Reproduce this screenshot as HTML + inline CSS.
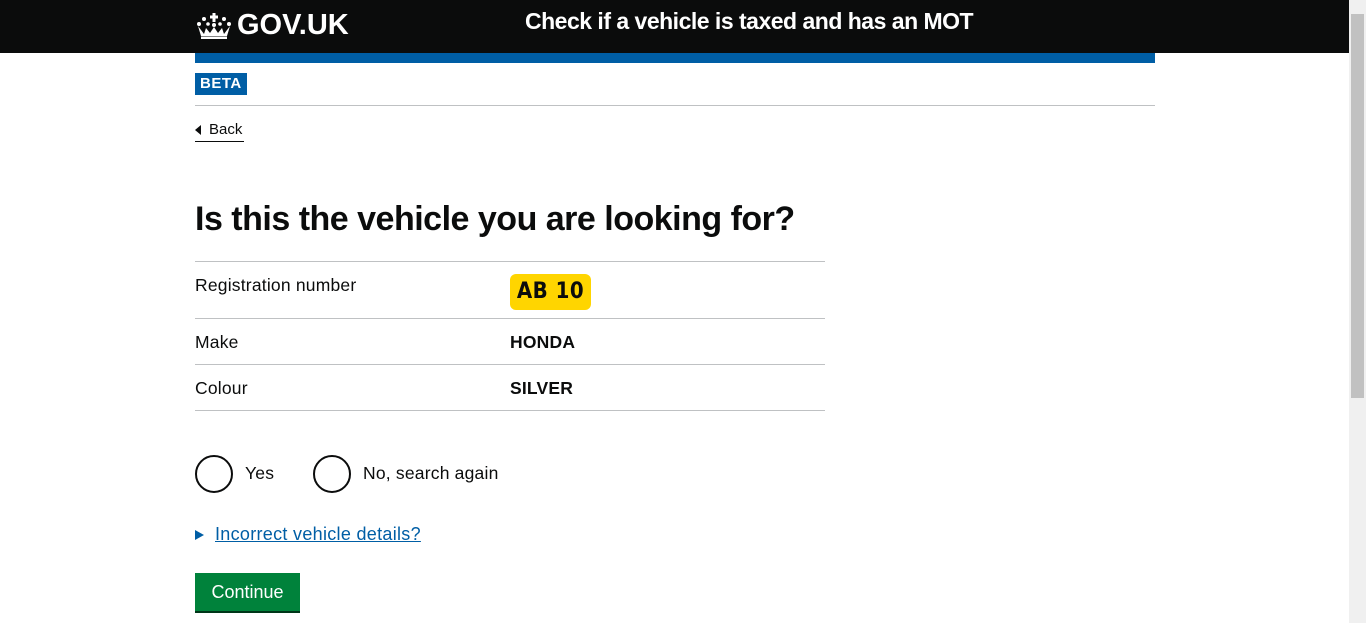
<!DOCTYPE html>
<html><head><meta charset="utf-8"><style>
*{margin:0;padding:0;box-sizing:border-box}
body{width:1366px;height:623px;overflow:hidden;background:#fff;font-family:"Liberation Sans",sans-serif;color:#0b0c0c;position:relative}
.hdr{position:absolute;left:0;top:0;width:1349px;height:53px;background:#0b0c0c}
.logo{position:absolute;left:237px;top:9px;color:#fff;font-weight:bold;font-size:29px}
.crown{position:absolute;left:196px;top:13px}
.title{position:absolute;left:525px;top:8px;color:#fff;font-weight:bold;font-size:23px;letter-spacing:-0.5px}
.bar{position:absolute;left:195px;top:53px;width:960px;height:10px;background:#005ea5}
.beta{position:absolute;left:195px;top:73px;background:#005ea5;color:#fff;font-weight:bold;font-size:15px;padding:2px 5px;height:22px;letter-spacing:0.5px}
.hr{position:absolute;left:195px;height:1px;background:#bfc1c3}
.back{position:absolute;left:195px;top:121px;font-size:15px;border-bottom:1px solid #0b0c0c;padding-left:14px;height:21px;width:49px}
.back:before{content:"";position:absolute;left:0;top:4px;border-right:6px solid #0b0c0c;border-top:5px solid transparent;border-bottom:5px solid transparent}
h1{position:absolute;left:195px;top:200px;font-size:34px;font-weight:bold;letter-spacing:-0.5px}
.t{position:absolute;font-size:17.5px;letter-spacing:0.2px}
.b{font-weight:bold}
.plate{position:absolute;left:510px;top:274px;width:81px;height:36px;background:#ffd500;border-radius:6px;font-weight:bold;font-size:22px;text-align:center;line-height:36px;font-family:"Liberation Sans Narrow","DejaVu Sans Condensed",sans-serif;letter-spacing:0.5px}
.r{position:absolute;top:455px;width:38px;height:38px;border:2px solid #0b0c0c;border-radius:50%}
.link{position:absolute;left:215px;top:524px;font-size:18px;color:#005ea5;text-decoration:underline;letter-spacing:0.3px}
.tri{position:absolute;left:195px;top:530px;border-left:9px solid #005ea5;border-top:5px solid transparent;border-bottom:5px solid transparent}
.btn{position:absolute;left:195px;top:573px;width:105px;height:40px;background:#00823b;border-bottom:2px solid #003618;color:#fff;font-size:18px;text-align:center;line-height:38px}
.sb{position:absolute;left:1349px;top:0;width:17px;height:623px;background:#f0f0f0}
.th{position:absolute;left:1351px;top:14px;width:13px;height:384px;background:#c1c1c1}
</style></head><body>
<div class="hdr">
<svg class="crown" width="36" height="26" viewBox="0 0 36 26" fill="#fff">
<rect x="16.5" y="0" width="3" height="9"/><rect x="14" y="2.5" width="8" height="3"/>
<circle cx="8" cy="6" r="2"/><circle cx="28" cy="6" r="2"/><circle cx="3" cy="11" r="2"/><circle cx="33" cy="11" r="2"/>
<circle cx="12" cy="11" r="1.8"/><circle cx="24" cy="11" r="1.8"/><circle cx="18" cy="12" r="2"/>
<path d="M2 13 L8 21 L10 15 L14 20 L18 14 L22 20 L26 15 L28 21 L34 13 L31 23 L5 23 Z"/>
<rect x="5" y="23.5" width="26" height="2.5"/>
</svg>
<div class="logo">GOV.UK</div><div class="title">Check if a vehicle is taxed and has an MOT</div></div>
<div class="bar"></div>
<div class="beta">BETA</div>
<div class="hr" style="top:105px;width:960px"></div>
<div class="back">Back</div>
<h1>Is this the vehicle you are looking for?</h1>
<div class="hr" style="top:261px;width:630px"></div>
<div class="t" style="left:195px;top:275px">Registration number</div>
<div class="plate">AB 10</div>
<div class="hr" style="top:318px;width:630px"></div>
<div class="t" style="left:195px;top:332px">Make</div>
<div class="t b" style="left:510px;top:332px">HONDA</div>
<div class="hr" style="top:364px;width:630px"></div>
<div class="t" style="left:195px;top:378px">Colour</div>
<div class="t b" style="left:510px;top:378px">SILVER</div>
<div class="hr" style="top:410px;width:630px"></div>
<div class="r" style="left:195px"></div><div class="t" style="left:245px;top:463px">Yes</div>
<div class="r" style="left:313px"></div><div class="t" style="left:363px;top:463px">No, search again</div>
<div class="tri"></div><div class="link">Incorrect vehicle details?</div>
<div class="btn">Continue</div>
<div class="sb"></div><div class="th"></div>
</body></html>
